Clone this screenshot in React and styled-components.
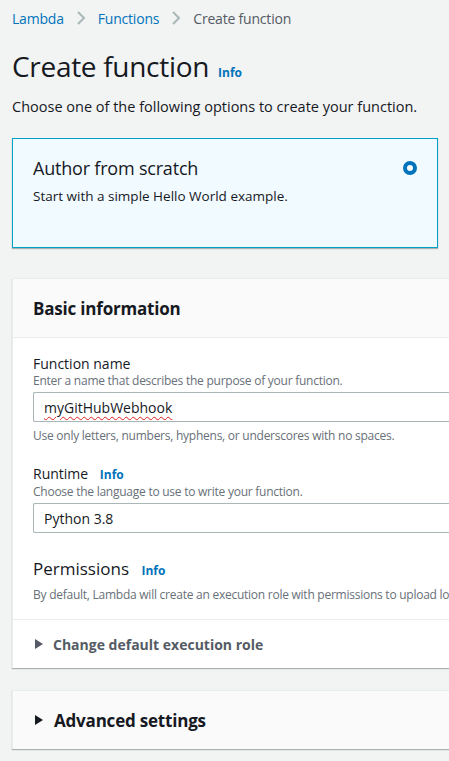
import React from 'react';
import styled, { createGlobalStyle } from 'styled-components';

const GlobalStyle = createGlobalStyle`
  html, body {
    margin: 0;
    padding: 0;
    background: #f2f3f3;
    font-family: "Open Sans", "Noto Sans", Arial, sans-serif;
    color: #16191f;
    overflow: hidden;
  }
`;

function Chevron() {
  return (
    <svg width="12" height="16" viewBox="0 0 12 16">
      <path d="M3 2l6 6-6 6" fill="none" stroke="#aab7b8" strokeWidth="2" />
    </svg>
  );
}

function Caret({ color }) {
  return (
    <svg width="10" height="12" viewBox="0 0 10 12">
      <path d="M1 1l8 5-8 5z" fill={color} />
    </svg>
  );
}

function App() {
  return (
    <Page>
      <GlobalStyle />
      <Breadcrumbs>
        <Crumb>Lambda</Crumb>
        <Chevron />
        <Crumb>Functions</Crumb>
        <Chevron />
        <Crumb current>Create function</Crumb>
      </Breadcrumbs>

      <TitleRow>
        <Title>Create function</Title>
        <Info>Info</Info>
      </TitleRow>
      <Intro>Choose one of the following options to create your function.</Intro>

      <OptionCard>
        <OptionText>
          <OptionTitle>Author from scratch</OptionTitle>
          <OptionDesc>Start with a simple Hello World example.</OptionDesc>
        </OptionText>
        <Radio />
      </OptionCard>

      <Panel>
        <PanelHeader>
          <PanelTitle>Basic information</PanelTitle>
        </PanelHeader>
        <PanelBody>
          <Field>
            <Label>Function name</Label>
            <Hint>Enter a name that describes the purpose of your function.</Hint>
            <Input>
              <Misspelled>myGitHubWebhook</Misspelled>
            </Input>
            <Hint below>Use only letters, numbers, hyphens, or underscores with no spaces.</Hint>
          </Field>

          <Field>
            <Label>Runtime <Info small>Info</Info></Label>
            <Hint>Choose the language to use to write your function.</Hint>
            <Input>Python 3.8</Input>
          </Field>

          <Permissions>
            <SectionTitle>Permissions <Info small>Info</Info></SectionTitle>
            <Hint>By default, Lambda will create an execution role with permissions to upload logs to Amazon CloudWatch Logs.</Hint>
          </Permissions>
        </PanelBody>
        <Expander>
          <Caret color="#545b64" />
          <ExpanderLabel>Change default execution role</ExpanderLabel>
        </Expander>
      </Panel>

      <Panel grey>
        <AdvancedRow>
          <Caret color="#16191f" />
          <AdvancedLabel>Advanced settings</AdvancedLabel>
        </AdvancedRow>
      </Panel>
    </Page>
  );
}

export default App;

const Page = styled.div`
  width: 449px;
  height: 761px;
  box-sizing: border-box;
  padding: 0 0 0 12px;
  overflow: hidden;
`;

const Breadcrumbs = styled.div`
  display: flex;
  align-items: center;
  gap: 11px;
  height: 36px;
  font-size: 14px;
  letter-spacing: -0.2px;
`;

const Crumb = styled.span`
  color: ${props => props.current ? '#545b64' : '#0073bb'};
`;

const TitleRow = styled.div`
  display: flex;
  align-items: baseline;
  gap: 9px;
  margin-top: 10px;
  white-space: nowrap;
`;

const Title = styled.h1`
  margin: 0;
  font-size: 28px;
  font-weight: 400;
  line-height: 40px;
  letter-spacing: -0.3px;
`;

const Info = styled.span`
  color: #0073bb;
  font-weight: 700;
  font-size: 12px;
  letter-spacing: 0;
  margin-left: ${props => props.small ? '8px' : '0'};
`;

const Intro = styled.p`
  margin: 10px 0 0 0;
  font-size: 14.5px;
  line-height: 22px;
  white-space: nowrap;
`;

const OptionCard = styled.div`
  display: flex;
  justify-content: space-between;
  width: 426px;
  height: 110px;
  box-sizing: border-box;
  margin-top: 20px;
  padding: 18px 20px 0 20px;
  background: #f1faff;
  border: 1px solid #00a1c9;
  box-shadow: 0 1px 1px rgba(0, 28, 36, 0.3);
`;

const OptionText = styled.div`
  display: flex;
  flex-direction: column;
`;

const OptionTitle = styled.div`
  font-size: 18px;
  line-height: 22px;
  letter-spacing: -0.2px;
`;

const OptionDesc = styled.div`
  margin-top: 8px;
  font-size: 13.5px;
  line-height: 18px;
`;

const Radio = styled.div`
  width: 14px;
  height: 14px;
  margin-top: 4px;
  box-sizing: border-box;
  border-radius: 50%;
  border: 4px solid #0073bb;
  background: #fff;
`;

const Panel = styled.div`
  width: 460px;
  margin-top: ${props => props.grey ? '22px' : '30px'};
  background: ${props => props.grey ? '#fafafa' : '#fff'};
  border-top: 1px solid #eaeded;
  border-left: 1px solid #eaeded;
  box-shadow: 0 1px 1px rgba(0, 28, 36, 0.3);
  overflow: hidden;
`;

const PanelHeader = styled.div`
  height: 58px;
  display: flex;
  align-items: center;
  padding-left: 20px;
  background: #fafafa;
  border-bottom: 1px solid #eaeded;
`;

const PanelTitle = styled.h2`
  margin: 0;
  font-size: 17px;
  font-weight: 700;
  letter-spacing: -0.2px;
`;

const PanelBody = styled.div`
  padding: 16px 0 0 20px;
`;

const Field = styled.div`
  display: flex;
  flex-direction: column;
  margin-bottom: 20px;
`;

const Label = styled.div`
  font-size: 14px;
  line-height: 19px;
  white-space: nowrap;
`;

const Hint = styled.div`
  font-size: 12px;
  line-height: 16px;
  color: #687078;
  white-space: nowrap;
  letter-spacing: -0.25px;
  margin-top: ${props => props.below ? '6px' : '0'};
  margin-bottom: ${props => props.below ? '0' : '3px'};
`;

const Input = styled.div`
  height: 30px;
  box-sizing: border-box;
  display: flex;
  align-items: center;
  padding-left: 10px;
  border: 1px solid #aab7b8;
  border-radius: 2px;
  border-right: none;
  background: #fff;
  font-size: 14px;
`;

const Misspelled = styled.span`
  text-decoration: underline wavy #e0201b;
  text-decoration-thickness: 1px;
  text-underline-offset: 3px;
`;

const Permissions = styled.div`
  padding: 4px 0 13px 0;
`;

const SectionTitle = styled.div`
  font-size: 17px;
  line-height: 24px;
  margin-bottom: 4px;
  white-space: nowrap;
`;

const Expander = styled.div`
  display: flex;
  align-items: center;
  gap: 9px;
  height: 48px;
  padding-left: 21px;
  border-top: 1px solid #eaeded;
`;

const ExpanderLabel = styled.span`
  font-size: 14px;
  font-weight: 700;
  color: #545b64;
`;

const AdvancedRow = styled.div`
  display: flex;
  align-items: center;
  gap: 10px;
  height: 58px;
  padding-left: 21px;
`;

const AdvancedLabel = styled.span`
  font-size: 17px;
  font-weight: 700;
  letter-spacing: -0.2px;
`;
